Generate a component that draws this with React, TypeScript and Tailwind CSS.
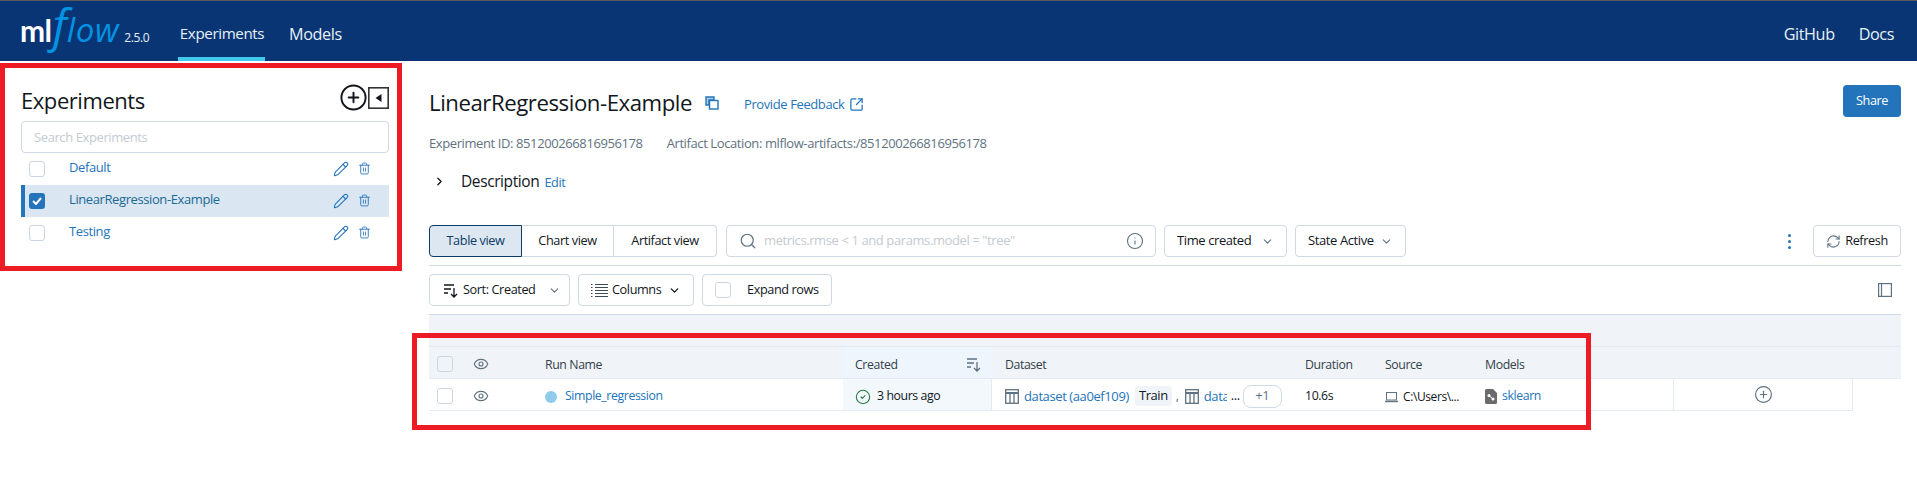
import React from 'react';
import { Pencil, Trash2, CirclePlus, Search, Info, ChevronDown, ChevronRight, RefreshCw, Eye, CircleCheck, SquareArrowOutUpRight } from 'lucide-react';

const experiments = [
  { name: 'Default', selected: false },
  { name: 'LinearRegression-Example', selected: true },
  { name: 'Testing', selected: false },
];

const CopyIcon = () => (
  <svg width="14" height="14" viewBox="0 0 14 14" fill="none" stroke="#2374BB" strokeWidth="1.4">
    <path d="M1 1h8v3H4v5H1z" fill="#2374BB" fillOpacity="0.35" />
    <rect x="4.5" y="4.5" width="8.5" height="8.5" />
  </svg>
);

const SortIcon = ({ color = '#11171C' }: { color?: string }) => (
  <svg width="15" height="15" viewBox="0 0 15 15" fill="none" stroke={color} strokeWidth="1.3">
    <path d="M1 2h10M1 6h7M1 10h4M11 5v9M8 11l3 3 3-3" />
  </svg>
);

const ColumnsIcon = () => (
  <svg width="17" height="14" viewBox="0 0 17 14" fill="none" stroke="#3D4C59" strokeWidth="1">
    <path d="M4 1.5h13M4 4.5h13M4 7.5h13M4 10.5h13M4 13.5h13" />
    <path d="M0 1.5h2M0 4.5h2M0 7.5h2M0 10.5h2M0 13.5h2" strokeDasharray="1 0.5" />
  </svg>
);

const TableIcon = () => (
  <svg width="14" height="15" viewBox="0 0 14 15" fill="none" stroke="#5F7281" strokeWidth="1.3">
    <rect x="0.7" y="0.7" width="12.6" height="13.6" />
    <path d="M0.7 4h12.6" strokeWidth="2" />
    <path d="M5 4v10M9 4v10" />
  </svg>
);

const PanelIcon = () => (
  <svg width="14" height="14" viewBox="0 0 14 14" fill="none" stroke="#5F7281" strokeWidth="1.2">
    <rect x="0.6" y="0.6" width="12.8" height="12.8" />
    <path d="M3.5 0.6v12.8" />
  </svg>
);

const LaptopIcon = () => (
  <svg width="13" height="12" viewBox="0 0 13 12" fill="none" stroke="#5F7281" strokeWidth="1">
    <rect x="1.5" y="1.5" width="10" height="7.5" />
    <path d="M0 10.5h13" strokeWidth="1.4" />
  </svg>
);

const ModelFileIcon = () => (
  <svg width="12" height="15" viewBox="0 0 12 15">
    <path d="M1.5 0H8l4 4v9.5a1.5 1.5 0 0 1-1.5 1.5h-9A1.5 1.5 0 0 1 0 13.5v-12A1.5 1.5 0 0 1 1.5 0z" fill="#6B6B6B" />
    <circle cx="4" cy="6.5" r="1.5" fill="#fff" />
    <circle cx="8" cy="10" r="1.5" fill="#fff" />
    <path d="M4 6.5L8 10" stroke="#fff" strokeWidth="1" />
  </svg>
);

const CollapseIcon = () => (
  <svg width="21" height="22" viewBox="0 0 21 22" fill="none" className="shrink-0">
    <rect x="0.8" y="0.8" width="19.4" height="20.4" stroke="#333" strokeWidth="1.6" />
    <path d="M13.5 7v8l-6-4z" fill="#11171C" />
  </svg>
);

const Box = ({ className = '' }: { className?: string }) => (
  <span className={`block w-4 h-4 rounded-[3px] border border-[#C8D6E3] ${className}`} />
);

const Btn = ({ className = '', children }: { className?: string; children: React.ReactNode }) => (
  <div className={`h-8 flex items-center rounded-[4px] border border-[#CDD9E5] text-[12.7px] text-[#11171C] ${className}`}>
    {children}
  </div>
);

const Sidebar = () => (
  <aside className="w-[397px] shrink-0 pl-[21px] pr-2">
    <div className="h-[60px] flex items-end pb-[6px] justify-between">
      <h1 className="text-[22px] leading-[30px] font-medium text-[#11171C] tracking-[-0.02em]">Experiments</h1>
      <div className="flex items-center pb-[3px]">
        <CirclePlus size={29} strokeWidth={1.6} className="text-[#11171C]" />
        <CollapseIcon />
      </div>
    </div>
    <div className="h-8 flex items-center pl-3 pt-px rounded-[4px] border border-[#CDD9E5] text-[13px] text-[#C3CBD2]">
      Search Experiments
    </div>
    {experiments.map((exp) => (
      <div
        key={exp.name}
        className={`h-8 flex items-center border-l-4 ${exp.selected ? 'bg-[#DAE6F2] border-[#2374BB]' : 'border-transparent'}`}
      >
        {exp.selected ? (
          <span className="ml-1 w-4 h-4 rounded-[3px] bg-[#2374BB] flex items-center justify-center">
            <svg width="10" height="8" viewBox="0 0 10 8" fill="none" stroke="#fff" strokeWidth="2">
              <path d="M1 4l3 3 5-6" />
            </svg>
          </span>
        ) : (
          <Box className="ml-1" />
        )}
        <span className={`ml-6 flex-1 pb-[2px] text-[13px] ${exp.selected ? 'text-[#1A6A94]' : 'text-[#2374BB]'}`}>{exp.name}</span>
        <Pencil size={16} className="text-[#2374BB] mb-px" strokeWidth={1.6} />
        <Trash2 size={13} className="text-[#2374BB] ml-[9px] mr-[18px] mb-px" strokeWidth={1.6} />
      </div>
    ))}
  </aside>
);

const Toolbar = () => (
  <div className="mt-[33px] flex items-center">
    <div className="flex h-8 text-[12.7px] text-[#11171C]">
      <div className="w-[93px] flex items-center justify-center bg-[#DCE7F2] border border-[#0E3A63] rounded-l-[4px] text-[#0E3A63]">Table view</div>
      <div className="w-[92px] flex items-center justify-center border-y border-r border-[#CDD9E5]">Chart view</div>
      <div className="w-[103px] flex items-center justify-center border-y border-r border-[#CDD9E5] rounded-r-[4px]">Artifact view</div>
    </div>
    <div className="ml-[9px] w-[430px] h-8 flex items-center rounded-[4px] border border-[#CDD9E5] pl-3 pr-[11px] text-[13px] text-[#C3CBD2]">
      <Search size={18} className="text-[#5F7281] mr-[7px]" strokeWidth={1.6} />
      <span className="flex-1">metrics.rmse &lt; 1 and params.model = "tree"</span>
      <Info size={18} className="text-[#5F7281]" strokeWidth={1.5} />
    </div>
    <Btn className="ml-2 w-[123px] pl-3 justify-between pr-3 font-medium text-[13px]">
      Time created <ChevronDown size={13} className="text-[#5F7281]" />
    </Btn>
    <Btn className="ml-2 w-[111px] pl-3 justify-between pr-3 font-medium text-[13px]">
      State Active <ChevronDown size={13} className="text-[#5F7281]" />
    </Btn>
    <div className="ml-auto flex flex-col gap-[3px] mr-[22px]">
      <span className="w-[3px] h-[3px] rounded-full bg-[#2374BB]" />
      <span className="w-[3px] h-[3px] rounded-full bg-[#2374BB]" />
      <span className="w-[3px] h-[3px] rounded-full bg-[#2374BB]" />
    </div>
    <Btn className="w-[88px] justify-center gap-1">
      <RefreshCw size={15} className="text-[#5F7281]" strokeWidth={1.7} /> Refresh
    </Btn>
  </div>
);

const HeaderCell = ({ className = '', children }: { className?: string; children?: React.ReactNode }) => (
  <div className={`h-full flex items-center text-[12.3px] font-medium text-[#333F49] ${className}`}>{children}</div>
);

const Cell = ({ className = '', children }: { className?: string; children?: React.ReactNode }) => (
  <div className={`h-full flex items-center text-[12.3px] text-[#11171C] ${className}`}>{children}</div>
);

const RunsTable = () => (
  <div className="mt-2 border-t border-[#CDD9E5]">
    <div className="h-[32px] bg-[#F0F4F8] border-b border-[#E4EAF0]" />
    <div className="h-[32px] bg-[#F0F4F8] border-b border-[#E4EAF0] flex">
      <HeaderCell className="w-[36px] pl-2 pt-[2px]"><Box className="bg-[#F0F4F8]" /></HeaderCell>
      <HeaderCell className="w-[68px] pl-2 pt-[2px]"><Eye size={16} className="text-[#5F7281]" strokeWidth={1.7} /></HeaderCell>
      <HeaderCell className="w-[310px] pl-3 pt-[6px]">Run Name</HeaderCell>
      <HeaderCell className="w-[149px] pl-3 pr-[11px] pt-[4px] justify-between bg-[#EEF5FC]"><span className="pt-[2px]">Created</span> <SortIcon color="#5F7281" /></HeaderCell>
      <HeaderCell className="w-[301px] pl-[13px] pt-[6px]">Dataset</HeaderCell>
      <HeaderCell className="w-[80px] pl-3 pt-[6px]">Duration</HeaderCell>
      <HeaderCell className="w-[100px] pl-3 pt-[6px]">Source</HeaderCell>
      <HeaderCell className="pl-3 pt-[6px]">Models</HeaderCell>
    </div>
    <div className="h-[32px] w-[1424px] border-b border-[#E4EAF0] flex">
      <Cell className="w-[36px] pl-2 pt-[2px]"><Box /></Cell>
      <Cell className="w-[68px] pl-2 pt-[2px]"><Eye size={16} className="text-[#5F7281]" strokeWidth={1.7} /></Cell>
      <Cell className="w-[310px] pl-3 pt-[4px] gap-2 text-[#2374BB]">
        <span className="w-3 h-3 rounded-full bg-[#8FCBEB]" />
        <span className="text-[#2374BB]">Simple_regression</span>
      </Cell>
      <Cell className="w-[149px] pl-3 pt-[4px] gap-[6px] bg-[#F3F8FD] border-r border-[#E4EAF0]">
        <CircleCheck size={16} className="text-[#277C43]" strokeWidth={1.6} /> 3 hours ago
      </Cell>
      <Cell className="w-[301px] pl-[13px] pt-[3px] text-[13px]">
        <TableIcon />
        <span className="ml-[5px] pt-px text-[#2374BB] whitespace-nowrap">dataset (aa0ef109)</span>
        <span className="ml-[6px] px-[4px] h-[20px] flex items-center bg-[#F0F4F8] rounded-[3px]">Train</span>
        <span className="ml-1 mr-[6px] text-[#5F7281]">,</span>
        <TableIcon />
        <span className="ml-[5px] pt-px w-[23px] overflow-hidden text-[#2374BB]">data</span>
        <span className="ml-1">...</span>
        <span className="ml-[3px] w-[39px] h-[23px] flex items-center justify-center rounded-[8px] border border-[#CDD9E5] text-[#5F7281]">+1</span>
      </Cell>
      <Cell className="w-[80px] pl-3 pt-[4px]">10.6s</Cell>
      <Cell className="w-[100px] pl-3 pt-[4px] gap-[5px] text-[12px]"><LaptopIcon /> C:\Users\...</Cell>
      <Cell className="w-[200px] pl-3 pt-[4px] gap-[5px]"><ModelFileIcon /><span className="text-[#2374BB]">sklearn</span></Cell>
      <Cell className="w-[180px] justify-center border-x border-[#E4EAF0]">
        <CirclePlus size={19} className="text-[#5F7281]" strokeWidth={1.5} />
      </Cell>
    </div>
  </div>
);

const App = () => {
  return (
    <div className="relative w-full h-screen bg-white overflow-hidden font-['Open_Sans','Noto_Sans',sans-serif] tracking-[-0.025em]">
      <header className="h-[61px] bg-[#0A3575] border-t border-[#5A5A5A] flex items-stretch text-[#E6F1F5] text-[16.2px]">
        <div className="w-[178px] pl-5 pt-[9px] flex items-baseline">
          <span className="font-['Lato',sans-serif] text-[30px] font-bold text-white leading-[28px] tracking-[-0.02em]">ml</span>
          <span className="ml-px italic text-[46px] text-[#0194E2] leading-[28px] tracking-normal">f</span>
          <span className="italic text-[33px] text-[#0194E2] leading-[28px] tracking-[0.02em]">low</span>
          <span className="ml-[5px] text-[12px] text-[#E6F1F5]">2.5.0</span>
        </div>
        <div className="w-[87px] pl-px pt-[9px] flex items-center justify-center border-b-4 border-[#43C9ED] text-[15.2px]">Experiments</div>
        <div className="ml-6 pt-[7px] flex items-center">Models</div>
        <div className="ml-auto pt-[7px] flex items-center gap-6 pr-[23px]">
          <span>GitHub</span>
          <span>Docs</span>
        </div>
      </header>

      <div className="flex">
        <Sidebar />
        <main className="flex-1 pl-8 pr-4 pt-6">
          <div className="flex items-start">
            <div className="h-9 flex items-center">
              <h2 className="text-[22.2px] font-medium text-[#11171C] tracking-[-0.02em]">LinearRegression-Example</h2>
              <span className="ml-[13px]"><CopyIcon /></span>
              <span className="ml-[25px] pt-[3px] text-[13px] text-[#2374BB]">Provide Feedback</span>
              <SquareArrowOutUpRight size={15} className="ml-[5px] mt-[3px] text-[#2374BB]" strokeWidth={2} />
            </div>
            <button className="ml-auto w-[58px] h-8 rounded-[4px] bg-[#2374BB] text-white text-[12.7px]">Share</button>
          </div>
          <div className="mt-[13px] h-[18px] pt-px flex items-center text-[13px] text-[#5F7281]">
            <span>Experiment ID: 851200266816956178</span>
            <span className="ml-6">Artifact Location: mlflow-artifacts:/851200266816956178</span>
          </div>
          <div className="mt-[18px] h-[22px] flex items-center pl-1">
            <ChevronRight size={13} strokeWidth={2.4} className="text-[#11171C]" />
            <span className="ml-[15px] pt-[2px] text-[15.5px] text-[#11171C]">Description</span>
            <span className="ml-[5px] pt-[3px] text-[12.7px] text-[#2374BB]">Edit</span>
          </div>

          <Toolbar />
          <div className="mt-2 border-t border-[#CDD9E5]" />

          <div className="mt-2 flex items-center">
            <Btn className="w-[141px] pl-[13px] gap-[5px] text-[#333F49]">
              <SortIcon /> <span className="flex-1">Sort: Created</span> <ChevronDown size={13} className="text-[#5F7281] mr-2" />
            </Btn>
            <Btn className="ml-2 w-[116px] pl-3 gap-[4px] text-[#333F49]">
              <ColumnsIcon /> Columns <ChevronDown size={13} className="ml-[3px] text-[#11171C]" strokeWidth={2.4} />
            </Btn>
            <Btn className="ml-2 w-[130px] pl-3 text-[#333F49]">
              <Box /> <span className="ml-4">Expand rows</span>
            </Btn>
            <span className="ml-auto mr-[9px]"><PanelIcon /></span>
          </div>

          <RunsTable />
        </main>
      </div>

      <div className="absolute left-0 top-[63px] w-[402px] h-[208px] border-[5px] border-[#ED1C24]" />
      <div className="absolute left-[412px] top-[333px] w-[1179px] h-[97px] border-[5px] border-[#ED1C24]" />
    </div>
  );
};

export default App;
